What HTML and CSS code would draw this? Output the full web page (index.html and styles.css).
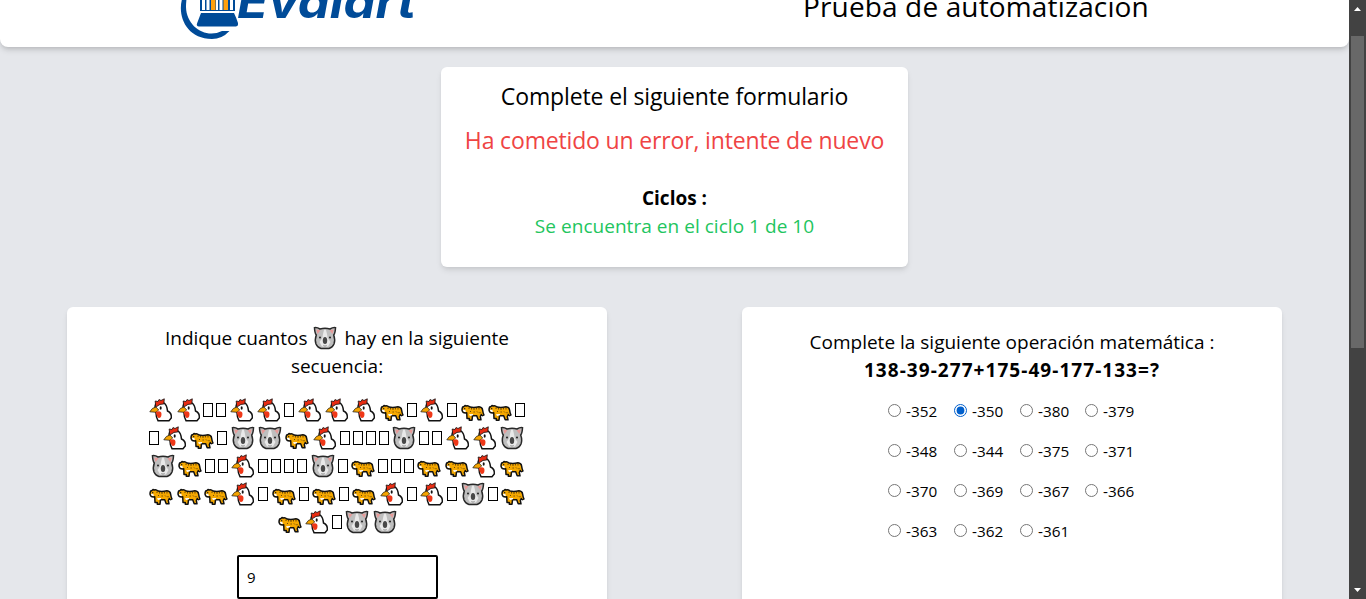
FILE: index.html
```html
<!DOCTYPE html>
<html lang="es">
<head>
<meta charset="utf-8">
<title>Prueba de automatización</title>
<link rel="stylesheet" href="styles.css">
</head>
<body>
<svg class="defs" aria-hidden="true">
  <symbol id="hen" viewBox="0 0 24 24">
    <path d="M6 9 Q6 4.5 11 4.5 L15 5 Q18 7 18.5 13 Q23 15 22.3 20 L20 22.7 H9 Q7 19 7 15Z" fill="#fff" stroke="#111" stroke-width="1.5"/>
    <path d="M6.6 7.5 L6.2 3 L9 3.5 L10 1.5 L12 2.5 L15.3 .8 L14.8 6 Q11 5.4 7.3 8.8Z" fill="#e82c12" stroke="#111" stroke-width=".8"/>
    <path d="M.8 13.8 Q3 9.5 7 9 L9.7 12 L7 14.3Z" fill="#f5a400" stroke="#111" stroke-width=".7"/>
    <path d="M6.7 14 Q12.3 12 12.5 16 Q12.5 20.3 9.5 20 Q7.3 18 6.7 14Z" fill="#ef3818"/>
    <ellipse cx="11.7" cy="10" rx="1" ry="1.8" fill="#111"/>
  </symbol>
  <symbol id="leopard" viewBox="0 0 24 24">
    <path d="M1 12 Q1 8.5 3 8.5 L4 7.5 5 8 Q7 7 9 9 Q13 10 18 8.7 Q21.3 9 21.6 12 Q22 15 23 17 Q21 18.5 20.3 16.5 L19.3 18.5 20 21.8 H17.2 L15.7 17.8 H11.5 L11 22.2 H8.3 V20.5 H6 L5.7 14.8 Q1.8 15.5 1 12Z" fill="#f5a800" stroke="#111" stroke-width="1.5" stroke-linejoin="round"/>
    <path d="M1.8 12 L4 11.5 5 13.5 Q2.5 15 1.8 12ZM8 16.3 L12 16 12 17.2 9 18Z" fill="#fff"/>
    <path d="M8 9.5v1.5M10.5 10v1.5M13 10v2M15.5 9.7v1.7M18 9.5v2M9 13l1 1M12.5 14h1.3M16 13.5l1 1M19 14v1.3" stroke="#5c3d06" stroke-width=".9"/>
    <circle cx="3.7" cy="10.7" r=".7" fill="#111"/>
  </symbol>
  <symbol id="koala" viewBox="0 0 24 24">
    <path d="M1.5 1.7 Q4 1.2 7 3 Q12 1.7 17 3 Q20 1.2 22.5 1.7 Q22.3 7 20.7 9 Q22.5 14 21 18 Q19.5 21.7 16 22.5 H8 Q4.5 21.7 3 18 Q1.5 14 3.3 9 Q1.7 7 1.5 1.7Z" fill="#bebebe" stroke="#292929" stroke-width="1.5"/>
    <path d="M3.2 3.5 L7.5 4.2 4.6 8ZM20.8 3.5 L16.5 4.2 19.4 8Z" fill="#e69a98"/>
    <path d="M10 8 L11 4 12 3.8 13 4 14 8 14.7 12 17.5 16 15 20.5 H9 L6.5 16 9.3 12Z" fill="#e9e9e9"/>
    <ellipse cx="12" cy="14.4" rx="2.2" ry="3.5" fill="#484848"/>
    <circle cx="7" cy="11.5" r="1" fill="#222"/><circle cx="17" cy="11.5" r="1" fill="#222"/>
    <path d="M10.3 19.5q1.7 1.2 3.4 0" fill="none" stroke="#777" stroke-width=".7"/>
  </symbol>
</svg>
<div class="window">
  <div class="page">
    <header class="topbar">
      <svg class="logo" width="250" height="47" viewBox="0 0 250 47">
        <path d="M11.5 -5 C4 12 12 39 40 39 Q50 39 57.5 31 H50 C34 39 14.5 27 14 7 Q14 2 15 -5Z" fill="#004b98"/>
        <path d="M28 -2h35v13H28z" fill="#004b98"/>
        <path d="M30-2h3v12h-3zM34.5-2h3v12h-3zM44-2h2v12h-2zM47.5-2h3v12h-3zM58-2h3v12h-3z" fill="#fff"/>
        <path d="M39-2h4.5v12H39zM51.5-2h4.5v12h-4.5z" fill="#ffa00d"/>
        <path d="M29 13H62Q64 17 66 23Q66.500 26 64 26.500H27Q24 26 25 23.500Z" fill="#004b98"/>
        <text class="brand" x="65" y="18" textLength="179" lengthAdjust="spacingAndGlyphs">Evalart</text>
      </svg>
      <h1 class="title">Prueba de automatización</h1>
    </header>
    <main>
      <section class="card intro">
        <h2 class="heading">Complete el siguiente formulario</h2>
        <p class="error">Ha cometido un error, intente de nuevo</p>
        <p class="cycles">Ciclos :</p>
        <p class="status">Se encuentra en el ciclo 1 de 10</p>
      </section>
      <div class="columns">
        <section class="card sequence">
          <p class="question"><span>Indique cuantos</span><svg class="animal inline"><use href="#koala"/></svg><span>hay en la siguiente</span></p>
          <p class="question">secuencia:</p>
          <div class="animals" id="animals"></div>
          <input class="answer" type="text" value="9">
        </section>
        <section class="card math">
          <p class="operation">Complete la siguiente operación matemática :</p>
          <p class="formula">138-39-277+175-49-177-133=?</p>
          <div class="options" id="options"></div>
        </section>
      </div>
    </main>
  </div>
  <div class="scrollbar">
    <svg class="arrow" width="17" height="36"><path d="M5 11 L8.5 7 12 11Z" fill="#fff"/></svg>
    <div class="thumb"></div>
    <svg class="arrow end" width="17" height="17"><path d="M5 6H12L8.5 10Z" fill="#fff"/></svg>
  </div>
</div>
<script src="script.js"></script>
</body>
</html>
```
FILE: styles.css
```css
* { box-sizing: border-box; margin: 0; padding: 0; }
body { font-family: "Open Sans", "Noto Sans", sans-serif; color: #000; overflow: hidden; }
.defs { display: none; }
.window { display: flex; width: 1366px; height: 599px; overflow: hidden; background: #e5e7eb; }
.page { width: 1349px; height: 599px; overflow: hidden; }
.topbar { display: flex; height: 47px; background: #fff; border-radius: 0 0 8px 8px; box-shadow: 0 4px 6px -1px rgba(0,0,0,.13), 0 2px 4px -1px rgba(0,0,0,.1); padding-left: 172px; }
.logo { overflow: hidden; flex: none; }
.brand { font: italic 700 46px Inter, sans-serif; fill: #004b98; }
.title { font-weight: 400; font-size: 28px; line-height: 36px; margin: -12px 0 0 381px; white-space: nowrap; letter-spacing: .14px; }
.card { background: #fff; border-radius: 6px; box-shadow: 0 4px 6px -1px rgba(0,0,0,.1), 0 2px 4px -1px rgba(0,0,0,.06); }
.intro { width: 467px; height: 200px; margin: 20px auto 0; padding-top: 13px; text-align: center; white-space: nowrap; }
.heading { font-size: 23px; font-weight: 400; line-height: 32px; letter-spacing: -.13px; }
.error { font-size: 23px; line-height: 32px; margin-top: 12px; color: #ef4444; letter-spacing: -.16px; }
.cycles { font-size: 19px; font-weight: 700; line-height: 28px; margin-top: 28px; }
.status { font-size: 19px; line-height: 28px; color: #22c55e; letter-spacing: .04px; }
.columns { display: flex; margin-top: 40px; padding-left: 67px; gap: 135px; }
.columns .card { width: 540px; height: 330px; text-align: center; white-space: nowrap; }
.sequence { padding-top: 17px; }
.question { display: flex; justify-content: center; align-items: center; height: 28px; font-size: 19px; line-height: 28px; }
.animal { width: 24px; height: 24px; }
.question .inline { margin: 0 7px 0 6px; }
.animals { margin-top: 16px; }
.line { display: flex; justify-content: center; height: 28px; }
.line .animal { flex: none; margin: 2px 1.6px 0 1.8px; }
.missing { width: 10px; height: 14px; border: 1px solid #000; margin: 7px 1.7px 0 1.3px; flex: none; }
.answer { display: block; width: 201px; height: 44px; margin: 19px 0 0 170px; border: 2px solid #000; border-radius: 2px; padding: 0 8px; font: 15px "Open Sans", sans-serif; }
.math { padding-top: 21px; }
.operation { font-size: 19px; line-height: 28px; }
.formula { font-size: 19px; font-weight: 700; line-height: 28px; letter-spacing: 1.05px; }
.options { display: grid; grid-template-columns: 66px 66px 65px 66px; grid-auto-rows: 40px; margin: 7px 0 0 146px; text-align: left; }
.option { display: flex; align-items: center; font-size: 15.3px; line-height: 24px; letter-spacing: 0; }
.option input { width: 13px; height: 13px; margin: 0 5px 2px 0; accent-color: #005fcc; flex: none; }
.scrollbar { width: 17px; height: 599px; background: #424242; display: flex; flex-direction: column; }
.thumb { width: 13px; height: 312px; margin-left: 2px; background: #686868; }
.arrow { display: block; flex: none; }
.end { margin-top: auto; }
```
FILE: script.js
```js
const icons = { C: "hen", L: "leopard", K: "koala" };
const rows = ["CCttCCtCCCLtCtLLt", "tCLtKKLCttttKttCCK", "KLttCttttKtLtttLLCL", "LLLCtLtLtLCtCtKtL", "LCtKK"];
document.getElementById("animals").innerHTML = rows.map(row =>
  '<div class="line">' + [...row].map(c => c === "t"
    ? '<span class="missing"></span>'
    : `<svg class="animal"><use href="#${icons[c]}"/></svg>`).join("") + "</div>").join("");

const values = [-352, -350, -380, -379, -348, -344, -375, -371, -370, -369, -367, -366, -363, -362, -361];
document.getElementById("options").innerHTML = values.map(v =>
  `<label class="option"><input type="radio" name="result" value="${v}"${v === -350 ? " checked" : ""}>${v}</label>`).join("");
```
